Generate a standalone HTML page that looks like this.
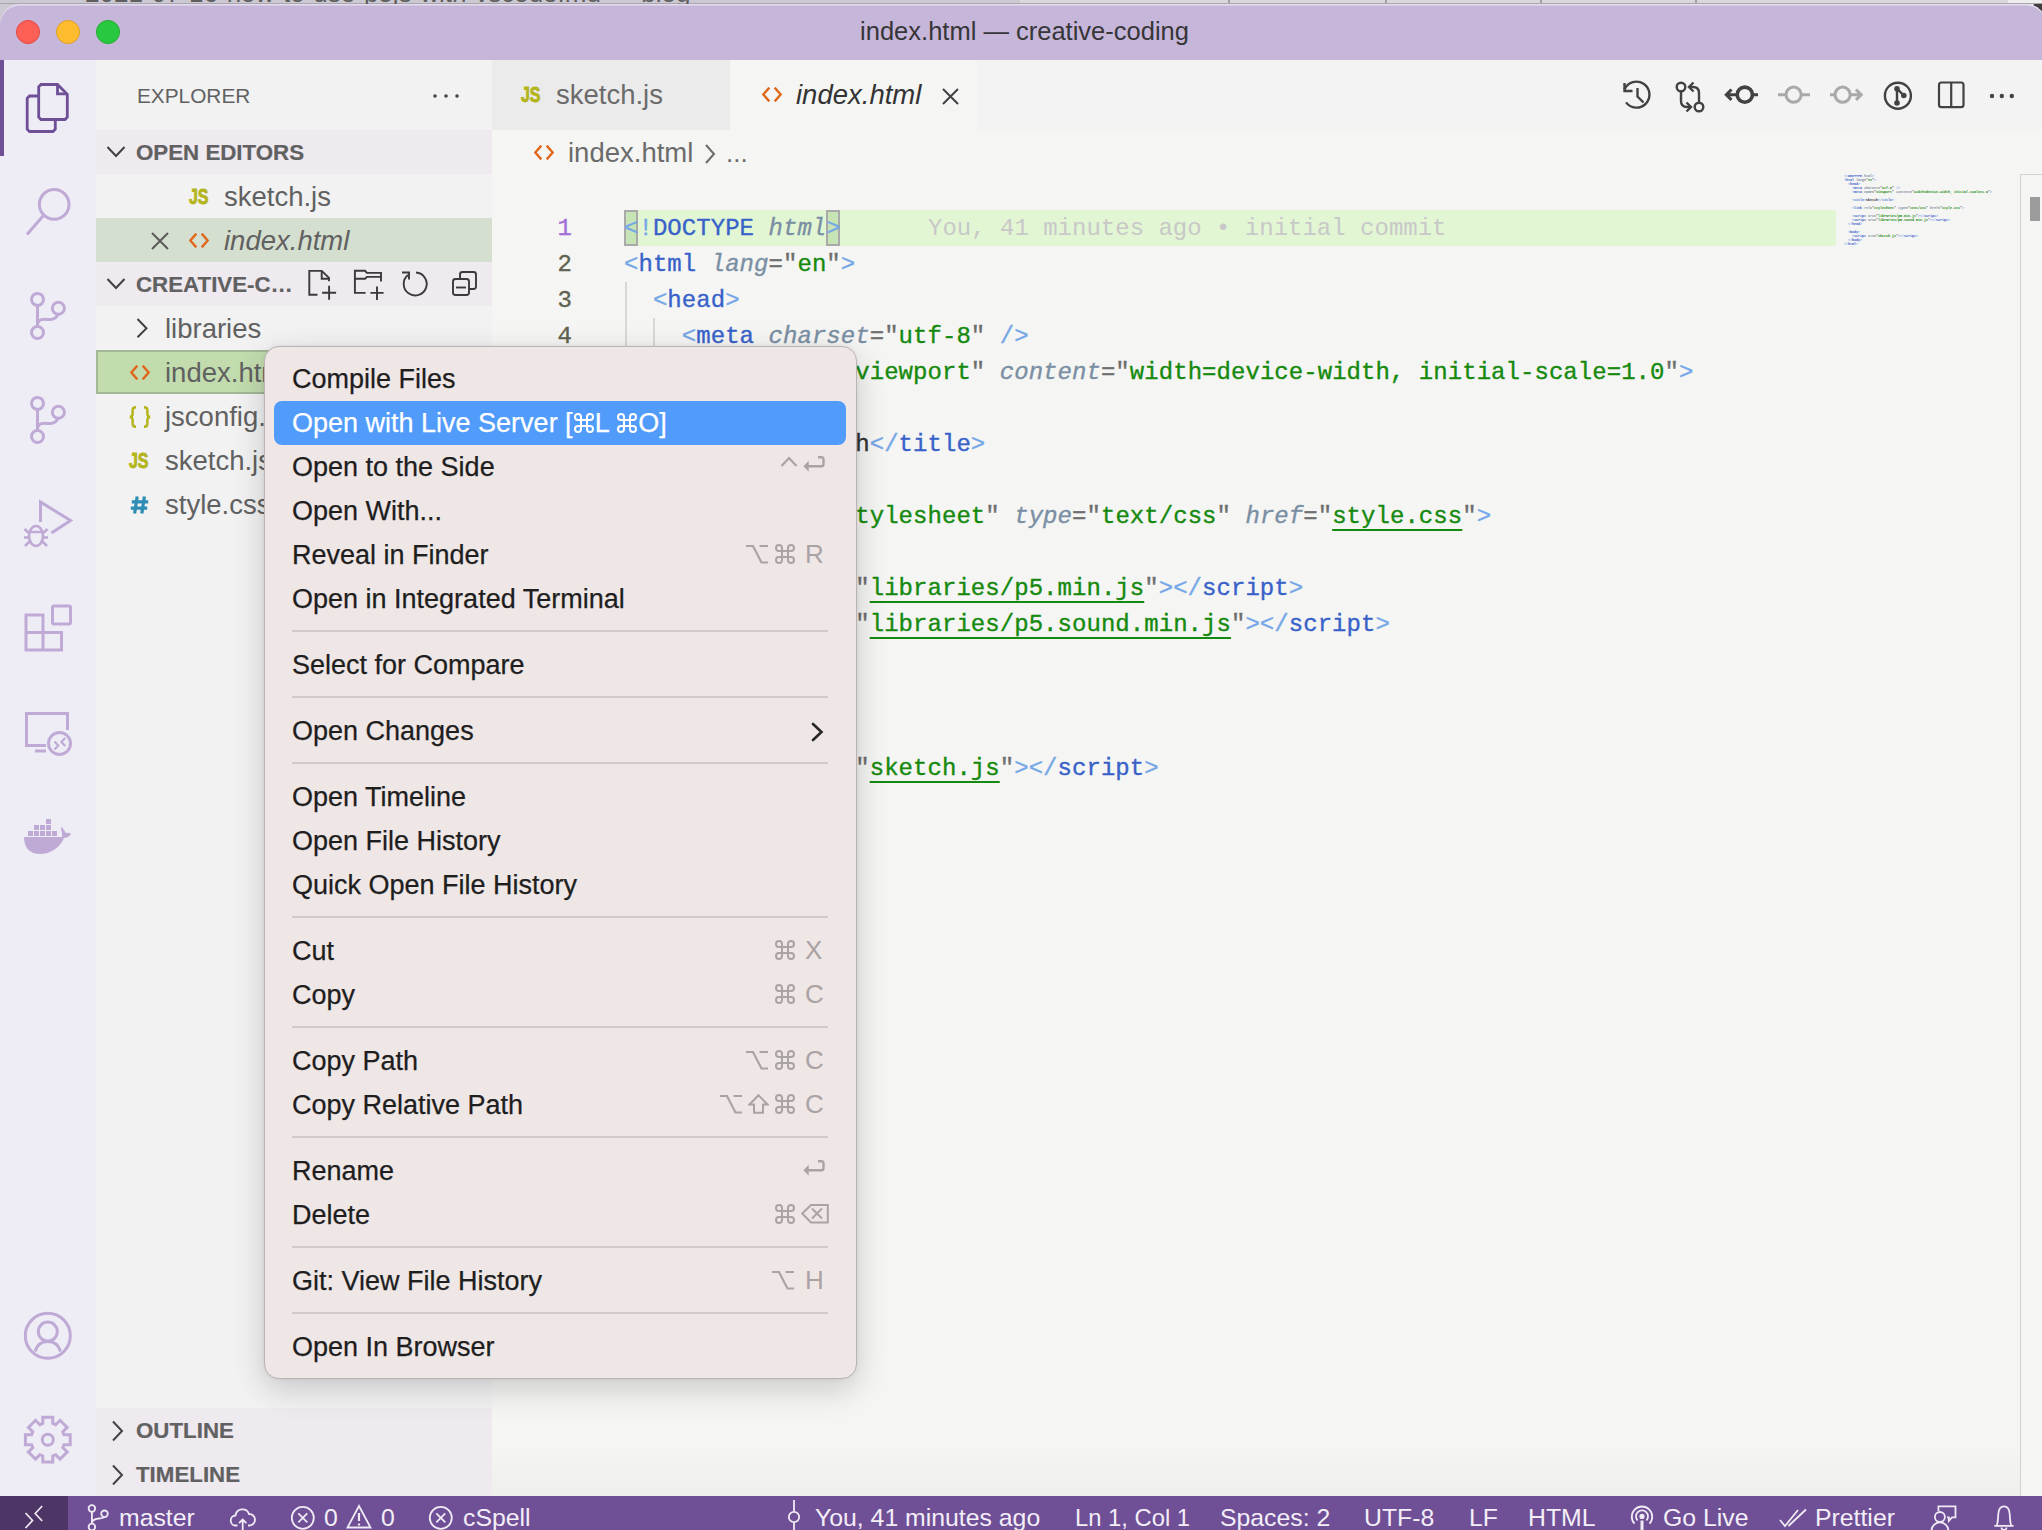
<!DOCTYPE html>
<html><head><meta charset="utf-8">
<style>
*{box-sizing:border-box;margin:0;padding:0}
html,body{width:2042px;height:1530px;overflow:hidden;background:#f2f2f2}
body{position:relative;font-family:"Liberation Sans",sans-serif}
.abs{position:absolute}
#bgwin{left:0;top:0;width:2042px;height:24px;background:#cdc9d2;overflow:hidden}
#title{left:0;top:4px;width:2046px;height:56px;background:#c6b6d9;border-radius:20px 20px 0 0;box-shadow:inset 0 1.5px 0 #e4dcef}
.tl{position:absolute;top:15.5px;width:24px;height:24px;border-radius:50%}
#ttext{left:3.5px;top:-1px;width:2042px;height:56px;line-height:56px;text-align:center;font-size:25.5px;color:#363538}
#act{left:0;top:60px;width:96px;height:1436px;background:#eeedf6}
#side{left:96px;top:60px;width:396px;height:1436px;background:#f2f2f2}
#editor{left:492px;top:60px;width:1550px;height:1436px;background:#f5f5f4}
#status{left:0;top:1496px;width:2042px;height:34px;background:#6f4f96}
.hdr{position:absolute;left:0;width:396px;height:44px;background:#efe9f0;font-weight:bold;font-size:22.3px;color:#616161}
.hdr > span{margin-top:0.8px;-webkit-text-stroke:0.2px currentColor}
.row{position:absolute;left:0;width:396px;height:44px;font-size:27.5px;color:#616161}
.js{top:0;line-height:44px;font-size:20px;font-weight:bold;color:#b5b52a;letter-spacing:-0.5px}
.ln{height:36px;line-height:38px}
.nm{height:36px;line-height:38px;text-align:right;color:#5f624f}
.nm.act{color:#a36fd9}
.p{color:#76a7e6}.t{color:#3862c9}.a{color:#7a8fa3;font-style:italic}.q{color:#6e6e6e}.v{color:#168a0e}.x{color:#333}
.lines .u{text-decoration:underline;text-underline-offset:5.5px;text-decoration-thickness:2px;text-decoration-skip-ink:none}
.minimap .lines .u{text-decoration:none}
.stx{top:0;line-height:44px;font-size:24.8px;color:#f3eef7;white-space:nowrap}
.mi{left:27px;height:44px;line-height:44px;font-size:27px;color:#1e1e1e;white-space:nowrap;-webkit-text-stroke:0.25px currentColor}
.sc{height:44px;line-height:44px;font-size:26px;color:#aaa3a4}
.row > span{margin-top:0.8px}
.code{font-family:"Liberation Mono",monospace;font-size:24px}
</style></head><body>
<div id="bgwin" class="abs"><div class="abs" style="left:1183px;top:0;width:2px;height:8px;background:#9a9a9a"></div><div class="abs" style="left:1020px;top:0;width:1022px;height:8px;background:#d8d8da"></div><div class="abs" style="left:1228px;top:0;width:2px;height:8px;background:#a0a0a0"></div><div class="abs" style="left:1385px;top:0;width:2px;height:8px;background:#a0a0a0"></div><div class="abs" style="left:1540px;top:0;width:2px;height:8px;background:#a0a0a0"></div><div class="abs" style="left:1695px;top:0;width:2px;height:8px;background:#a0a0a0"></div><div class="abs" style="left:2008px;top:0;width:34px;height:8px;background:#eeeeee"></div><div class="abs" style="left:2033px;top:3px;width:10px;height:9px;background:#3d3d3d;border-radius:4px 0 0 0"></div><div class="abs" style="left:0;top:2.5px;width:2042px;height:1.5px;background:#a9a6ad"></div><div class="abs" style="left:85px;top:-20px;font-size:26px;line-height:26px;color:#5f5f5f;white-space:nowrap">2021-07-16-how-to-use-p5js-with-vscode.md — blog</div></div>
<div id="title" class="abs">
  <div class="tl" style="left:16px;background:#fe5f57;border:1px solid #e2463f"></div>
  <div class="tl" style="left:56px;background:#febc2e;border:1px solid #dfa023"></div>
  <div class="tl" style="left:96px;background:#28c840;border:1px solid #1dad2b"></div>
  <div id="ttext" class="abs">index.html — creative-coding</div>
</div>
<div id="act" class="abs"></div>
<svg class="abs" style="left:0;top:0" width="96" height="1530" viewBox="0 0 96 1530" fill="none" stroke="#bfaad6" stroke-width="3">
  <rect x="0" y="60" width="4" height="96" fill="#6f4f96" stroke="none"/>
  <g stroke="#6f4f96" stroke-linejoin="miter" stroke-width="2.8">
    <path d="M38.5 96 H29.5 L27.2 98.3 V129.2 L29.5 131.5 H53 L55.3 129.2 V119.5"/>
    <path d="M41 84.5 H57.5 L67.3 94.3 V117.2 L65 119.5 H41 L38.7 117.2 V86.8 Z"/>
    <path d="M57.5 85 V93.8 H67"/>
  </g>
  <circle cx="54.2" cy="204.4" r="14.8"/>
  <path d="M43 216 L27 234.5"/>
  <g id="git1">
    <circle cx="37.5" cy="299.4" r="6"/>
    <circle cx="58.4" cy="308.3" r="6"/>
    <circle cx="37.5" cy="332.5" r="6"/>
    <path d="M37.5 305.4 V326.5"/>
    <path d="M38 323 C40 318 44 319.5 50 319.5 C54 319.5 57 317 58 314"/>
  </g>
  <use href="#git1" y="104"/>
  <path d="M40.5 522 V502 L70.5 520.5 L51.5 533"/>
  <g stroke-width="2.6">
    <ellipse cx="36" cy="536" rx="7" ry="10"/>
    <path d="M29 532 H43 M24.5 529 L29 533 M47.5 529 L43 533 M24 537.5 H28.5 M43.5 537.5 H48 M25 546 L30 541 M47 546 L42 541"/>
  </g>
  <path d="M26 615 H43 V650 H26 Z M26 632.5 H61.5 V650 H43"/>
  <rect x="52.5" y="606" width="18" height="18" rx="1.5"/>
  <path d="M46 745.5 H26.5 V713.5 H67.5 V730"/>
  <path d="M35 751 H46" stroke-width="3"/>
  <circle cx="59.5" cy="743.5" r="11"/>
  <path d="M54.5 741.5 L58.3 745.5 L54.5 749.5 M65.2 738 L61.4 742 L65.2 746" stroke-width="2.2"/>
  <g fill="#bfaad6" stroke="none">
    <rect x="28" y="831" width="5" height="5"/><rect x="34" y="831" width="5" height="5"/><rect x="40" y="831" width="5" height="5"/><rect x="46" y="831" width="5" height="5"/><rect x="52" y="831" width="5" height="5"/>
    <rect x="34" y="825" width="5" height="5"/><rect x="40" y="825" width="5" height="5"/><rect x="46" y="825" width="5" height="5"/>
    <rect x="46" y="819" width="5" height="5"/>
    <path d="M24 837 H62 C63 833 60 829 61.5 827 C64 829 65 832 66 833 C68 832.5 70 833 71 834 C69 837 66 838 64 838 C60 848 50 854 40 854 C30 854 24 848 24 837 Z"/>
  </g>
  <circle cx="47.8" cy="1335.8" r="22.5"/>
  <circle cx="47.8" cy="1331.6" r="9.5"/>
  <path d="M35 1351.5 C37 1345 42 1341.5 47.8 1341.5 C53.6 1341.5 58.6 1345 60.6 1351.5"/>
  <path d="M42.8 1423.5 L42.8 1417.3 L52.8 1417.3 L52.8 1423.5 L55.7 1424.7 L60.1 1420.3 L67.2 1427.4 L62.8 1431.8 L64.0 1434.7 L70.2 1434.7 L70.2 1444.7 L64.0 1444.7 L62.8 1447.6 L67.2 1452.0 L60.1 1459.1 L55.7 1454.7 L52.8 1455.9 L52.8 1462.1 L42.8 1462.1 L42.8 1455.9 L39.9 1454.7 L35.5 1459.1 L28.4 1452.0 L32.8 1447.6 L31.6 1444.7 L25.4 1444.7 L25.4 1434.7 L31.6 1434.7 L32.8 1431.8 L28.4 1427.4 L35.5 1420.3 L39.9 1424.7 Z"/>
  <circle cx="47.8" cy="1439.7" r="5.5"/>
</svg>

<div id="side" class="abs">
  <div class="abs" style="left:41px;top:0;height:70px;line-height:72px;font-size:20.8px;color:#616161">EXPLORER</div>
  <svg class="abs" style="left:330px;top:28px" width="40" height="20"><g fill="#424242"><circle cx="9" cy="8" r="1.8"/><circle cx="20" cy="8" r="1.8"/><circle cx="31" cy="8" r="1.8"/></g></svg>
  <div class="hdr" style="top:70px"><svg class="abs" style="left:10px;top:15px" width="22" height="14" fill="none" stroke="#424242" stroke-width="2"><path d="M1.5 2 L10 11 L18.5 2"/></svg><span class="abs" style="left:40px;top:0;line-height:44px">OPEN EDITORS</span></div>
  <div class="row" style="top:114px"><svg class="abs" style="left:93.4px;top:15.2px;overflow:visible" width="20" height="15"><use href="#jsi"/></svg><span class="abs" style="left:128px;line-height:44px">sketch.js</span></div>
  <div class="row" style="top:158px;background:#d5dfcf"><svg class="abs" style="left:55px;top:13.5px" width="18" height="18" fill="none" stroke="#5a5a5a" stroke-width="2"><path d="M1 1 L17 17 M17 1 L1 17"/></svg><svg class="abs" style="left:93.4px;top:15px;overflow:visible" width="20" height="15"><use href="#htm"/></svg><span class="abs" style="left:128px;line-height:44px;font-style:italic">index.html</span></div>
  <div class="hdr" style="top:202px"><svg class="abs" style="left:10px;top:15px" width="22" height="14" fill="none" stroke="#424242" stroke-width="2"><path d="M1.5 2 L10 11 L18.5 2"/></svg><span class="abs" style="left:40px;top:0;line-height:44px">CREATIVE-C…</span>
    <svg class="abs" style="left:194px;top:0" width="202" height="44" fill="none" stroke="#3a3a3a" stroke-width="1.9">
      <path d="M27.5 32.7 H19.3 V8.9 H31.7 L39 15.8 V19.3"/><path d="M31.7 8.9 V16.8 H39"/><path d="M39.1 23.7 V37.7 M32.1 30.7 H46.1"/>
      <path d="M75.6 30.9 H64.9 V8.8 H75.1 L76.9 10.9 H91 V19.4"/><path d="M64.9 16.7 H75.1 L76.9 14.9 H91"/><path d="M87 24.4 V38 M80.4 30.9 H93.6"/>
      <path d="M118 13 A11.5 11.5 0 1 0 126 10.5"/><path d="M112 10.5 H119 V17.5"/>
      <rect x="170" y="10" width="16" height="17" rx="2.5"/><rect x="163" y="17" width="16" height="16" rx="2.5" fill="#efe9f0"/><path d="M166 25.5 H176"/>
    </svg>
  </div>
  <div class="row" style="top:246px"><svg class="abs" style="left:40px;top:12px" width="14" height="21" fill="none" stroke="#424242" stroke-width="2"><path d="M1.5 1 L10.5 10.2 L1.5 19.2"/></svg><span class="abs" style="left:69px;line-height:44px">libraries</span></div>
  <div class="row" style="top:290px;background:#c2dcae;border:2px solid #a3b897"><svg class="abs" style="left:31.8px;top:13px;overflow:visible" width="20" height="15"><use href="#htm"/></svg><span class="abs" style="left:67px;top:-2px;line-height:44px">index.html</span></div>
  <div class="row" style="top:334px"><svg class="abs" style="left:32.5px;top:11.5px;overflow:visible" width="22" height="22"><use href="#brc"/></svg><span class="abs" style="left:69px;line-height:44px">jsconfig.json</span></div>
  <div class="row" style="top:378px"><svg class="abs" style="left:33.4px;top:15.3px;overflow:visible" width="20" height="15"><use href="#jsi"/></svg><span class="abs" style="left:69px;line-height:44px">sketch.js</span></div>
  <div class="row" style="top:422px"><svg class="abs" style="left:34px;top:13.6px;overflow:visible" width="19" height="18"><use href="#hsh"/></svg><span class="abs" style="left:69px;line-height:44px">style.css</span></div>
  <div class="hdr" style="top:1348px"><svg class="abs" style="left:14px;top:12px" width="16" height="22" fill="none" stroke="#424242" stroke-width="2"><path d="M3 1.5 L12 11 L3 20.5"/></svg><span class="abs" style="left:40px;top:0;line-height:44px">OUTLINE</span></div>
  <div class="hdr" style="top:1392px"><svg class="abs" style="left:14px;top:12px" width="16" height="22" fill="none" stroke="#424242" stroke-width="2"><path d="M3 1.5 L12 11 L3 20.5"/></svg><span class="abs" style="left:40px;top:0;line-height:44px">TIMELINE</span></div>
</div>


<div id="editor" class="abs">
  <div class="abs" style="left:0;top:0;width:1550px;height:70px;background:#f3f3f3"></div>
  <div class="abs" style="left:0;top:0;width:238px;height:70px;background:#ebebeb"><svg class="abs" style="left:29px;top:27px;overflow:visible" width="20" height="15"><use href="#jsi"/></svg><span class="abs" style="left:64px;top:13px;line-height:44px;font-size:27.5px;color:#6b6b6b">sketch.js</span></div>
  <div class="abs" style="left:238px;top:0;width:248px;height:70px;background:#f5f5f4"><svg class="abs" style="left:31.8px;top:27px;overflow:visible" width="20" height="15"><use href="#htm"/></svg><span class="abs" style="left:66px;top:13px;line-height:44px;font-size:27.5px;color:#333;font-style:italic">index.html</span><svg class="abs" style="left:211px;top:27px" width="20" height="20" fill="none" stroke="#424242" stroke-width="2"><path d="M2 2 L17 17 M17 2 L2 17"/></svg></div>
    <div class="abs" style="left:0;top:70px;width:1550px;height:46px"><svg class="abs" style="left:41.6px;top:14.6px;overflow:visible" width="20" height="15"><use href="#htm"/></svg><span class="abs" style="left:76px;top:0;line-height:46px;font-size:27.5px;color:#6b6b6b">index.html</span><svg class="abs" style="left:210px;top:13px" width="16" height="22" fill="none" stroke="#6b6b6b" stroke-width="2"><path d="M4 2 L12 11 L4 20"/></svg><span class="abs" style="left:234px;top:0;line-height:46px;font-size:26px;color:#6b6b6b">...</span></div>
  <div class="abs" style="left:132px;top:150px;width:1212px;height:36px;background:#e2f6d4"></div>
  <div class="abs" style="left:132px;top:150px;width:14.4px;height:36px;background:#c6e4b4;border:2px solid #a9a9a9"></div>
  <div class="abs" style="left:333.6px;top:150px;width:14.4px;height:36px;background:#c6e4b4;border:2px solid #a9a9a9"></div>
  <div class="abs" style="left:133px;top:222px;width:2px;height:576px;background:#d8d8d8"></div>
  <div class="abs" style="left:161px;top:258px;width:2px;height:360px;background:#d8d8d8"></div>
  <div class="abs" style="left:161px;top:690px;width:2px;height:72px;background:#d8d8d8"></div>
  <div class="abs code nums" style="left:18px;top:150px;width:62px;-webkit-text-stroke:0.35px currentColor">
<div class="nm act">1</div>
<div class="nm">2</div>
<div class="nm">3</div>
<div class="nm">4</div>
<div class="nm">5</div>
<div class="nm">6</div>
<div class="nm">7</div>
<div class="nm">8</div>
<div class="nm">9</div>
<div class="nm">10</div>
<div class="nm">11</div>
<div class="nm">12</div>
<div class="nm">13</div>
<div class="nm">14</div>
<div class="nm">15</div>
<div class="nm">16</div>
<div class="nm">17</div>
<div class="nm">18</div>
  </div>
  <div class="abs code lines" style="left:132px;top:150px;white-space:pre;letter-spacing:0.048px;-webkit-text-stroke:0.35px currentColor"><div class="ln"><span class="p">&lt;!</span><span class="t">DOCTYPE</span> <span class="a">html</span><span class="p">&gt;</span></div><div class="ln"><span class="p">&lt;</span><span class="t">html</span> <span class="a">lang</span><span class="q">=&quot;</span><span class="v">en</span><span class="q">&quot;</span><span class="p">&gt;</span></div><div class="ln">  <span class="p">&lt;</span><span class="t">head</span><span class="p">&gt;</span></div><div class="ln">    <span class="p">&lt;</span><span class="t">meta</span> <span class="a">charset</span><span class="q">=&quot;</span><span class="v">utf-8</span><span class="q">&quot;</span> <span class="p">/&gt;</span></div><div class="ln">    <span class="p">&lt;</span><span class="t">meta</span> <span class="a">name</span><span class="q">=&quot;</span><span class="v">viewport</span><span class="q">&quot;</span> <span class="a">content</span><span class="q">=&quot;</span><span class="v">width=device-width, initial-scale=1.0</span><span class="q">&quot;</span><span class="p">&gt;</span></div><div class="ln"> </div><div class="ln">    <span class="p">&lt;</span><span class="t">title</span><span class="p">&gt;</span><span class="x">Sketch</span><span class="p">&lt;/</span><span class="t">title</span><span class="p">&gt;</span></div><div class="ln"> </div><div class="ln">    <span class="p">&lt;</span><span class="t">link</span> <span class="a">rel</span><span class="q">=&quot;</span><span class="v">stylesheet</span><span class="q">&quot;</span> <span class="a">type</span><span class="q">=&quot;</span><span class="v">text/css</span><span class="q">&quot;</span> <span class="a">href</span><span class="q">=&quot;</span><span class="v u">style.css</span><span class="q">&quot;</span><span class="p">&gt;</span></div><div class="ln"> </div><div class="ln">    <span class="p">&lt;</span><span class="t">script</span> <span class="a">src</span><span class="q">=&quot;</span><span class="v u">libraries/p5.min.js</span><span class="q">&quot;</span><span class="p">&gt;&lt;/</span><span class="t">script</span><span class="p">&gt;</span></div><div class="ln">    <span class="p">&lt;</span><span class="t">script</span> <span class="a">src</span><span class="q">=&quot;</span><span class="v u">libraries/p5.sound.min.js</span><span class="q">&quot;</span><span class="p">&gt;&lt;/</span><span class="t">script</span><span class="p">&gt;</span></div><div class="ln">  <span class="p">&lt;/</span><span class="t">head</span><span class="p">&gt;</span></div><div class="ln"> </div><div class="ln">  <span class="p">&lt;</span><span class="t">body</span><span class="p">&gt;</span></div><div class="ln">    <span class="p">&lt;</span><span class="t">script</span> <span class="a">src</span><span class="q">=&quot;</span><span class="v u">sketch.js</span><span class="q">&quot;</span><span class="p">&gt;&lt;/</span><span class="t">script</span><span class="p">&gt;</span></div><div class="ln">  <span class="p">&lt;/</span><span class="t">body</span><span class="p">&gt;</span></div><div class="ln"><span class="p">&lt;/</span><span class="t">html</span><span class="p">&gt;</span></div>
  </div>
  <div class="abs code" style="left:436px;top:150px;height:36px;line-height:37px;color:#c8c8c8;white-space:pre">You, 41 minutes ago • initial commit</div>
  <div class="abs minimap" style="left:1352px;top:114px;transform-origin:0 0;transform:scale(0.1389,0.1111)"><div class="code lines" style="white-space:pre;font-weight:bold"><div class="ln"><span class="p">&lt;!</span><span class="t">DOCTYPE</span> <span class="a">html</span><span class="p">&gt;</span></div><div class="ln"><span class="p">&lt;</span><span class="t">html</span> <span class="a">lang</span><span class="q">=&quot;</span><span class="v">en</span><span class="q">&quot;</span><span class="p">&gt;</span></div><div class="ln">  <span class="p">&lt;</span><span class="t">head</span><span class="p">&gt;</span></div><div class="ln">    <span class="p">&lt;</span><span class="t">meta</span> <span class="a">charset</span><span class="q">=&quot;</span><span class="v">utf-8</span><span class="q">&quot;</span> <span class="p">/&gt;</span></div><div class="ln">    <span class="p">&lt;</span><span class="t">meta</span> <span class="a">name</span><span class="q">=&quot;</span><span class="v">viewport</span><span class="q">&quot;</span> <span class="a">content</span><span class="q">=&quot;</span><span class="v">width=device-width, initial-scale=1.0</span><span class="q">&quot;</span><span class="p">&gt;</span></div><div class="ln"> </div><div class="ln">    <span class="p">&lt;</span><span class="t">title</span><span class="p">&gt;</span><span class="x">Sketch</span><span class="p">&lt;/</span><span class="t">title</span><span class="p">&gt;</span></div><div class="ln"> </div><div class="ln">    <span class="p">&lt;</span><span class="t">link</span> <span class="a">rel</span><span class="q">=&quot;</span><span class="v">stylesheet</span><span class="q">&quot;</span> <span class="a">type</span><span class="q">=&quot;</span><span class="v">text/css</span><span class="q">&quot;</span> <span class="a">href</span><span class="q">=&quot;</span><span class="v u">style.css</span><span class="q">&quot;</span><span class="p">&gt;</span></div><div class="ln"> </div><div class="ln">    <span class="p">&lt;</span><span class="t">script</span> <span class="a">src</span><span class="q">=&quot;</span><span class="v u">libraries/p5.min.js</span><span class="q">&quot;</span><span class="p">&gt;&lt;/</span><span class="t">script</span><span class="p">&gt;</span></div><div class="ln">    <span class="p">&lt;</span><span class="t">script</span> <span class="a">src</span><span class="q">=&quot;</span><span class="v u">libraries/p5.sound.min.js</span><span class="q">&quot;</span><span class="p">&gt;&lt;/</span><span class="t">script</span><span class="p">&gt;</span></div><div class="ln">  <span class="p">&lt;/</span><span class="t">head</span><span class="p">&gt;</span></div><div class="ln"> </div><div class="ln">  <span class="p">&lt;</span><span class="t">body</span><span class="p">&gt;</span></div><div class="ln">    <span class="p">&lt;</span><span class="t">script</span> <span class="a">src</span><span class="q">=&quot;</span><span class="v u">sketch.js</span><span class="q">&quot;</span><span class="p">&gt;&lt;/</span><span class="t">script</span><span class="p">&gt;</span></div><div class="ln">  <span class="p">&lt;/</span><span class="t">body</span><span class="p">&gt;</span></div><div class="ln"><span class="p">&lt;/</span><span class="t">html</span><span class="p">&gt;</span></div>
  </div></div>
  <div class="abs" style="left:1528px;top:114px;width:22px;height:1322px;border-left:1.5px solid #d2d2d2;border-top:1.5px solid #d2d2d2"></div>
  <div class="abs" style="left:1538px;top:137px;width:10px;height:24px;background:#9c9c9c"></div>
  <div class="abs" style="left:0;top:1386px;width:1528px;height:50px;background:linear-gradient(rgba(0,0,0,0),rgba(0,0,0,0.028))"></div>
</div>


<svg class="abs" style="left:1600px;top:60px" width="442" height="70" fill="none" stroke="#424242" stroke-width="2.4" stroke-linecap="butt">
  <path d="M26 42.4 A13 13 0 1 0 24.5 29.5"/><path d="M24.5 23 V31 H32.5"/><path d="M37.5 28 V36.5 L43.5 42.5"/>
  <circle cx="81" cy="27" r="4.3"/><circle cx="99" cy="47" r="4.3"/>
  <path d="M81 31.3 V41 Q81 47 87 47 H90.5"/><path d="M86.5 42.5 L91 47 L86.5 51.5"/>
  <path d="M99 42.7 V33 Q99 27 93 27 H89.5"/><path d="M93.5 22.5 L89 27 L93.5 31.5"/>
  <circle cx="144.8" cy="34.7" r="7.6" stroke-width="3.6"/><path d="M152.4 34.7 H158 M137.2 34.7 H126.5 M131.5 29.5 L126.3 34.7 L131.5 39.9" stroke-width="3"/>
  <g stroke="#a9a9a9" stroke-width="3"><circle cx="193.6" cy="34.7" r="7.6"/><path d="M178 34.7 H186 M201.2 34.7 H210"/>
  <circle cx="242.6" cy="34.7" r="7.6"/><path d="M230 34.7 H235 M250.2 34.7 H261 M256 29.5 L261.2 34.7 L256 39.9"/></g>
  <circle cx="297.9" cy="35.7" r="13"/><path d="M297 28.7 V43 M297 28.7 L303.8 35.5"/><g fill="#424242" stroke="none"><circle cx="297" cy="28.7" r="2.8"/><circle cx="303.8" cy="35.5" r="2.8"/><circle cx="297" cy="43" r="2.8"/></g>
  <rect x="339" y="22.5" width="24.5" height="24.7" rx="2.5" stroke-width="2.2"/><path d="M351.2 22.5 V47.2" stroke-width="2.2"/>
  <g fill="#424242" stroke="none"><circle cx="392" cy="36" r="2.2"/><circle cx="401.8" cy="36" r="2.2"/><circle cx="411.8" cy="36" r="2.2"/></g>
</svg>

<div id="status" class="abs">
  <div class="abs" style="left:0;top:0;width:68px;height:34px;background:#4d3566"></div>
  <svg class="abs" style="left:0;top:0" width="2042" height="34" fill="none" stroke="#f0eaf5" stroke-width="1.8">
    <path d="M25.5 17 L32.5 24.5 L25.5 32 M42.2 10 L35.2 17.5 L42.2 25" stroke-width="1.7"/>
    <circle cx="91.9" cy="12.5" r="3.3"/><circle cx="104.5" cy="17.8" r="3.3"/><circle cx="91.9" cy="31" r="3.3"/><path d="M91.9 15.8 V27.7 M92 26 Q93.5 23 99 22.5 Q104 22 104.5 21.1"/>
    <path d="M237.5 29.5 H236 A5 5 0 0 1 235.5 19.5 A7 7 0 0 1 249 18 A5.3 5.3 0 0 1 249.5 29.5 H248 M242.7 34 V23.5 M239 27.2 L242.7 23.5 L246.4 27.2"/>
    <circle cx="302.8" cy="21.8" r="11"/><path d="M298.3 17.3 L307.3 26.3 M307.3 17.3 L298.3 26.3"/>
    <path d="M359 10 L370.5 31.5 H347.5 Z"/><path d="M359 17 V25 M359 27.5 V29.5" stroke-width="2.2"/>
    <circle cx="440.8" cy="21.8" r="11"/><path d="M436.3 17.3 L445.3 26.3 M445.3 17.3 L436.3 26.3"/>
    <path d="M794 4 V15.5 M794 26.5 V34"/><circle cx="794" cy="21" r="5.2"/>
    <circle cx="1642" cy="20.4" r="2.6" fill="#f0eaf5" stroke="none"/><path d="M1637.6 24.5 A6 6 0 1 1 1646.4 24.5 M1634.5 27.6 A10.2 10.2 0 1 1 1649.5 27.6"/><path d="M1642 24.5 V34" stroke-width="3"/>
    <path d="M1780 24 L1785 30 L1798 14 M1788.5 30 L1806 13.5"/>
    <path d="M1938.4 15 V10.4 H1955.5 V21.4 H1952 L1948.8 25 V21.4 H1947"/><circle cx="1939.9" cy="21" r="5"/><path d="M1931.5 34 A8.5 8.5 0 0 1 1948.4 34"/>
    <path d="M1994.3 29.8 H2013.6 M1996.8 29.5 C1998 26 1998 22 1998.3 18 C1998.6 13 2001 10.3 2004 10.3 C2007 10.3 2009.4 13 2009.7 18 C2010 22 2010 26 2011.2 29.5 M2001.5 31.5 A2.5 2.5 0 0 0 2006.5 31.5"/>
  </svg>
  <div class="abs stx" style="left:119px">master</div>
  <div class="abs stx" style="left:324px">0</div>
  <div class="abs stx" style="left:381px">0</div>
  <div class="abs stx" style="left:463px">cSpell</div>
  <div class="abs stx" style="left:815px">You, 41 minutes ago</div>
  <div class="abs stx" style="left:1075px;font-size:23.8px">Ln 1, Col 1</div>
  <div class="abs stx" style="left:1220px">Spaces: 2</div>
  <div class="abs stx" style="left:1364px">UTF-8</div>
  <div class="abs stx" style="left:1469px">LF</div>
  <div class="abs stx" style="left:1528px">HTML</div>
  <div class="abs stx" style="left:1663px">Go Live</div>
  <div class="abs stx" style="left:1815px">Prettier</div>
</div>

<div id="menu" class="abs" style="left:264px;top:346px;width:593px;height:1033px;background:#efe6e6;border-radius:15px;border:1px solid #b9b3b4;box-shadow:0 10px 32px rgba(0,0,0,0.18),0 0 4px rgba(0,0,0,0.07);overflow:hidden">
<div class="abs mi" style="top:10px">Compile Files</div>
<div class="abs" style="left:9px;top:54px;width:572px;height:44px;background:#519bfb;border-radius:8px"></div>
<div class="abs mi" style="top:54px;color:#fff">Open with Live Server [<svg width="20" height="20" style="display:inline-block;vertical-align:-1px;margin:0 1px;color:#fff"><use href="#cmd"/></svg>L <svg width="20" height="20" style="display:inline-block;vertical-align:-1px;margin:0 1px;color:#fff"><use href="#cmd"/></svg>O]</div>
<div class="abs mi" style="top:98px">Open to the Side</div>
<svg class="abs" style="left:514.5px;top:108.5px;color:#aaa3a4" width="18" height="12"><use href="#ctrl"/></svg>
<svg class="abs" style="left:537.5px;top:107.5px;color:#aaa3a4" width="23" height="17"><use href="#ret"/></svg>
<div class="abs mi" style="top:142px">Open With...</div>
<div class="abs mi" style="top:186px">Reveal in Finder</div>
<svg class="abs" style="left:481px;top:197px;color:#aaa3a4" width="22" height="20"><use href="#opt"/></svg>
<svg class="abs" style="left:510px;top:197px;color:#aaa3a4" width="20" height="20"><use href="#cmd"/></svg>
<div class="abs sc" style="margin-top:-1px;top:186px;left:540px">R</div>
<div class="abs mi" style="top:230px">Open in Integrated Terminal</div>
<div class="abs" style="left:27px;top:283px;width:536px;height:2px;background:#d4cacb"></div>
<div class="abs mi" style="top:296px">Select for Compare</div>
<div class="abs" style="left:27px;top:349px;width:536px;height:2px;background:#d4cacb"></div>
<div class="abs mi" style="top:362px">Open Changes</div>
<svg class="abs" style="left:545px;top:374px" width="16" height="22" fill="none" stroke="#262626" stroke-width="2.6" stroke-linecap="round"><path d="M3 3 L11.5 11 L3 19"/></svg>
<div class="abs" style="left:27px;top:415px;width:536px;height:2px;background:#d4cacb"></div>
<div class="abs mi" style="top:428px">Open Timeline</div>
<div class="abs mi" style="top:472px">Open File History</div>
<div class="abs mi" style="top:516px">Quick Open File History</div>
<div class="abs" style="left:27px;top:569px;width:536px;height:2px;background:#d4cacb"></div>
<div class="abs mi" style="top:582px">Cut</div>
<svg class="abs" style="left:510px;top:593px;color:#aaa3a4" width="20" height="20"><use href="#cmd"/></svg>
<div class="abs sc" style="margin-top:-1px;top:582px;left:540px">X</div>
<div class="abs mi" style="top:626px">Copy</div>
<svg class="abs" style="left:510px;top:637px;color:#aaa3a4" width="20" height="20"><use href="#cmd"/></svg>
<div class="abs sc" style="margin-top:-1px;top:626px;left:540px">C</div>
<div class="abs" style="left:27px;top:679px;width:536px;height:2px;background:#d4cacb"></div>
<div class="abs mi" style="top:692px">Copy Path</div>
<svg class="abs" style="left:481px;top:703px;color:#aaa3a4" width="22" height="20"><use href="#opt"/></svg>
<svg class="abs" style="left:510px;top:703px;color:#aaa3a4" width="20" height="20"><use href="#cmd"/></svg>
<div class="abs sc" style="margin-top:-1px;top:692px;left:540px">C</div>
<div class="abs mi" style="top:736px">Copy Relative Path</div>
<svg class="abs" style="left:455px;top:747px;color:#aaa3a4" width="22" height="20"><use href="#opt"/></svg>
<svg class="abs" style="left:483px;top:747px;color:#aaa3a4" width="21" height="20"><use href="#shift"/></svg>
<svg class="abs" style="left:510px;top:747px;color:#aaa3a4" width="20" height="20"><use href="#cmd"/></svg>
<div class="abs sc" style="margin-top:-1px;top:736px;left:540px">C</div>
<div class="abs" style="left:27px;top:789px;width:536px;height:2px;background:#d4cacb"></div>
<div class="abs mi" style="top:802px">Rename</div>
<svg class="abs" style="left:537.5px;top:811.5px;color:#aaa3a4" width="23" height="17"><use href="#ret"/></svg>
<div class="abs mi" style="top:846px">Delete</div>
<svg class="abs" style="left:510px;top:857px;color:#aaa3a4" width="20" height="20"><use href="#cmd"/></svg>
<svg class="abs" style="left:536px;top:857px;color:#aaa3a4" width="28" height="20"><use href="#del"/></svg>
<div class="abs" style="left:27px;top:899px;width:536px;height:2px;background:#d4cacb"></div>
<div class="abs mi" style="top:912px">Git: View File History</div>
<svg class="abs" style="left:507px;top:923px;color:#aaa3a4" width="22" height="20"><use href="#opt"/></svg>
<div class="abs sc" style="margin-top:-1px;top:912px;left:540px">H</div>
<div class="abs" style="left:27px;top:965px;width:536px;height:2px;background:#d4cacb"></div>
<div class="abs mi" style="top:978px">Open In Browser</div>
</div>
<svg width="0" height="0" style="position:absolute">
 <defs>
  <symbol id="htm" viewBox="0 0 20 15"><path d="M7.3 0.6 L1.3 7.5 L7.3 14.4 M12.7 0.6 L18.7 7.5 L12.7 14.4" fill="none" stroke="#e0661c" stroke-width="2.4"/></symbol>
  <symbol id="jsi" viewBox="0 0 20 15" overflow="visible"><text x="0" y="14.8" font-family="Liberation Sans" font-weight="bold" font-size="21.5" fill="#b4b51d" stroke="#b4b51d" stroke-width="0.9" textLength="19.5" lengthAdjust="spacingAndGlyphs">JS</text></symbol>
  <symbol id="brc" viewBox="0 0 22 22"><path d="M7 1.2 Q3.6 1.2 3.6 4.6 V8 Q3.6 10.8 0.8 11 Q3.6 11.2 3.6 14 V17.4 Q3.6 20.8 7 20.8 M15 1.2 Q18.4 1.2 18.4 4.6 V8 Q18.4 10.8 21.2 11 Q18.4 11.2 18.4 14 V17.4 Q18.4 20.8 15 20.8" fill="none" stroke="#b4b51d" stroke-width="2.5"/></symbol>
  <symbol id="hsh" viewBox="0 0 19 18"><path d="M7.2 0.5 L4.6 17.5 M14.4 0.5 L11.8 17.5 M1.8 5.8 H18.2 M0.8 12.2 H17.2" fill="none" stroke="#2e8db5" stroke-width="3.2"/></symbol>

  <symbol id="cmd" viewBox="0 0 20 20"><path d="M7 7 V4 A3 3 0 1 0 4 7 H16 A3 3 0 1 0 13 4 V16 A3 3 0 1 0 16 13 H4 A3 3 0 1 0 7 16 Z" fill="none" stroke="currentColor" stroke-width="2"/></symbol>
  <symbol id="opt" viewBox="0 0 22 20"><path d="M0 2 H7 L15.5 18.5 H22 M13.5 2 H22" fill="none" stroke="currentColor" stroke-width="2.2"/></symbol>
  <symbol id="shift" viewBox="0 0 21 20"><path d="M10.5 1.3 L1.5 10.5 H6 V18.8 H15 V10.5 H19.5 Z" fill="none" stroke="currentColor" stroke-width="2"/></symbol>
  <symbol id="ret" viewBox="0 0 23 17"><path d="M15 2.2 H18.5 Q20.5 2.2 20.5 4.5 V9 Q20.5 11.3 18.5 11.3 H5" fill="none" stroke="currentColor" stroke-width="2.4"/><path d="M0.5 11.2 L5.7 5.7 V16.7 Z" fill="currentColor"/></symbol>
  <symbol id="del" viewBox="0 0 28 20"><path d="M1.2 9.5 L10 1 H26.8 V18.5 H10 Z M11 4.5 L21 14.5 M21 4.5 L11 14.5" fill="none" stroke="currentColor" stroke-width="2"/></symbol>
  <symbol id="ctrl" viewBox="0 0 18 12"><path d="M1.5 10 L9 2 L16.5 10" fill="none" stroke="currentColor" stroke-width="2.2"/></symbol>
 </defs>
</svg>

</body></html>
